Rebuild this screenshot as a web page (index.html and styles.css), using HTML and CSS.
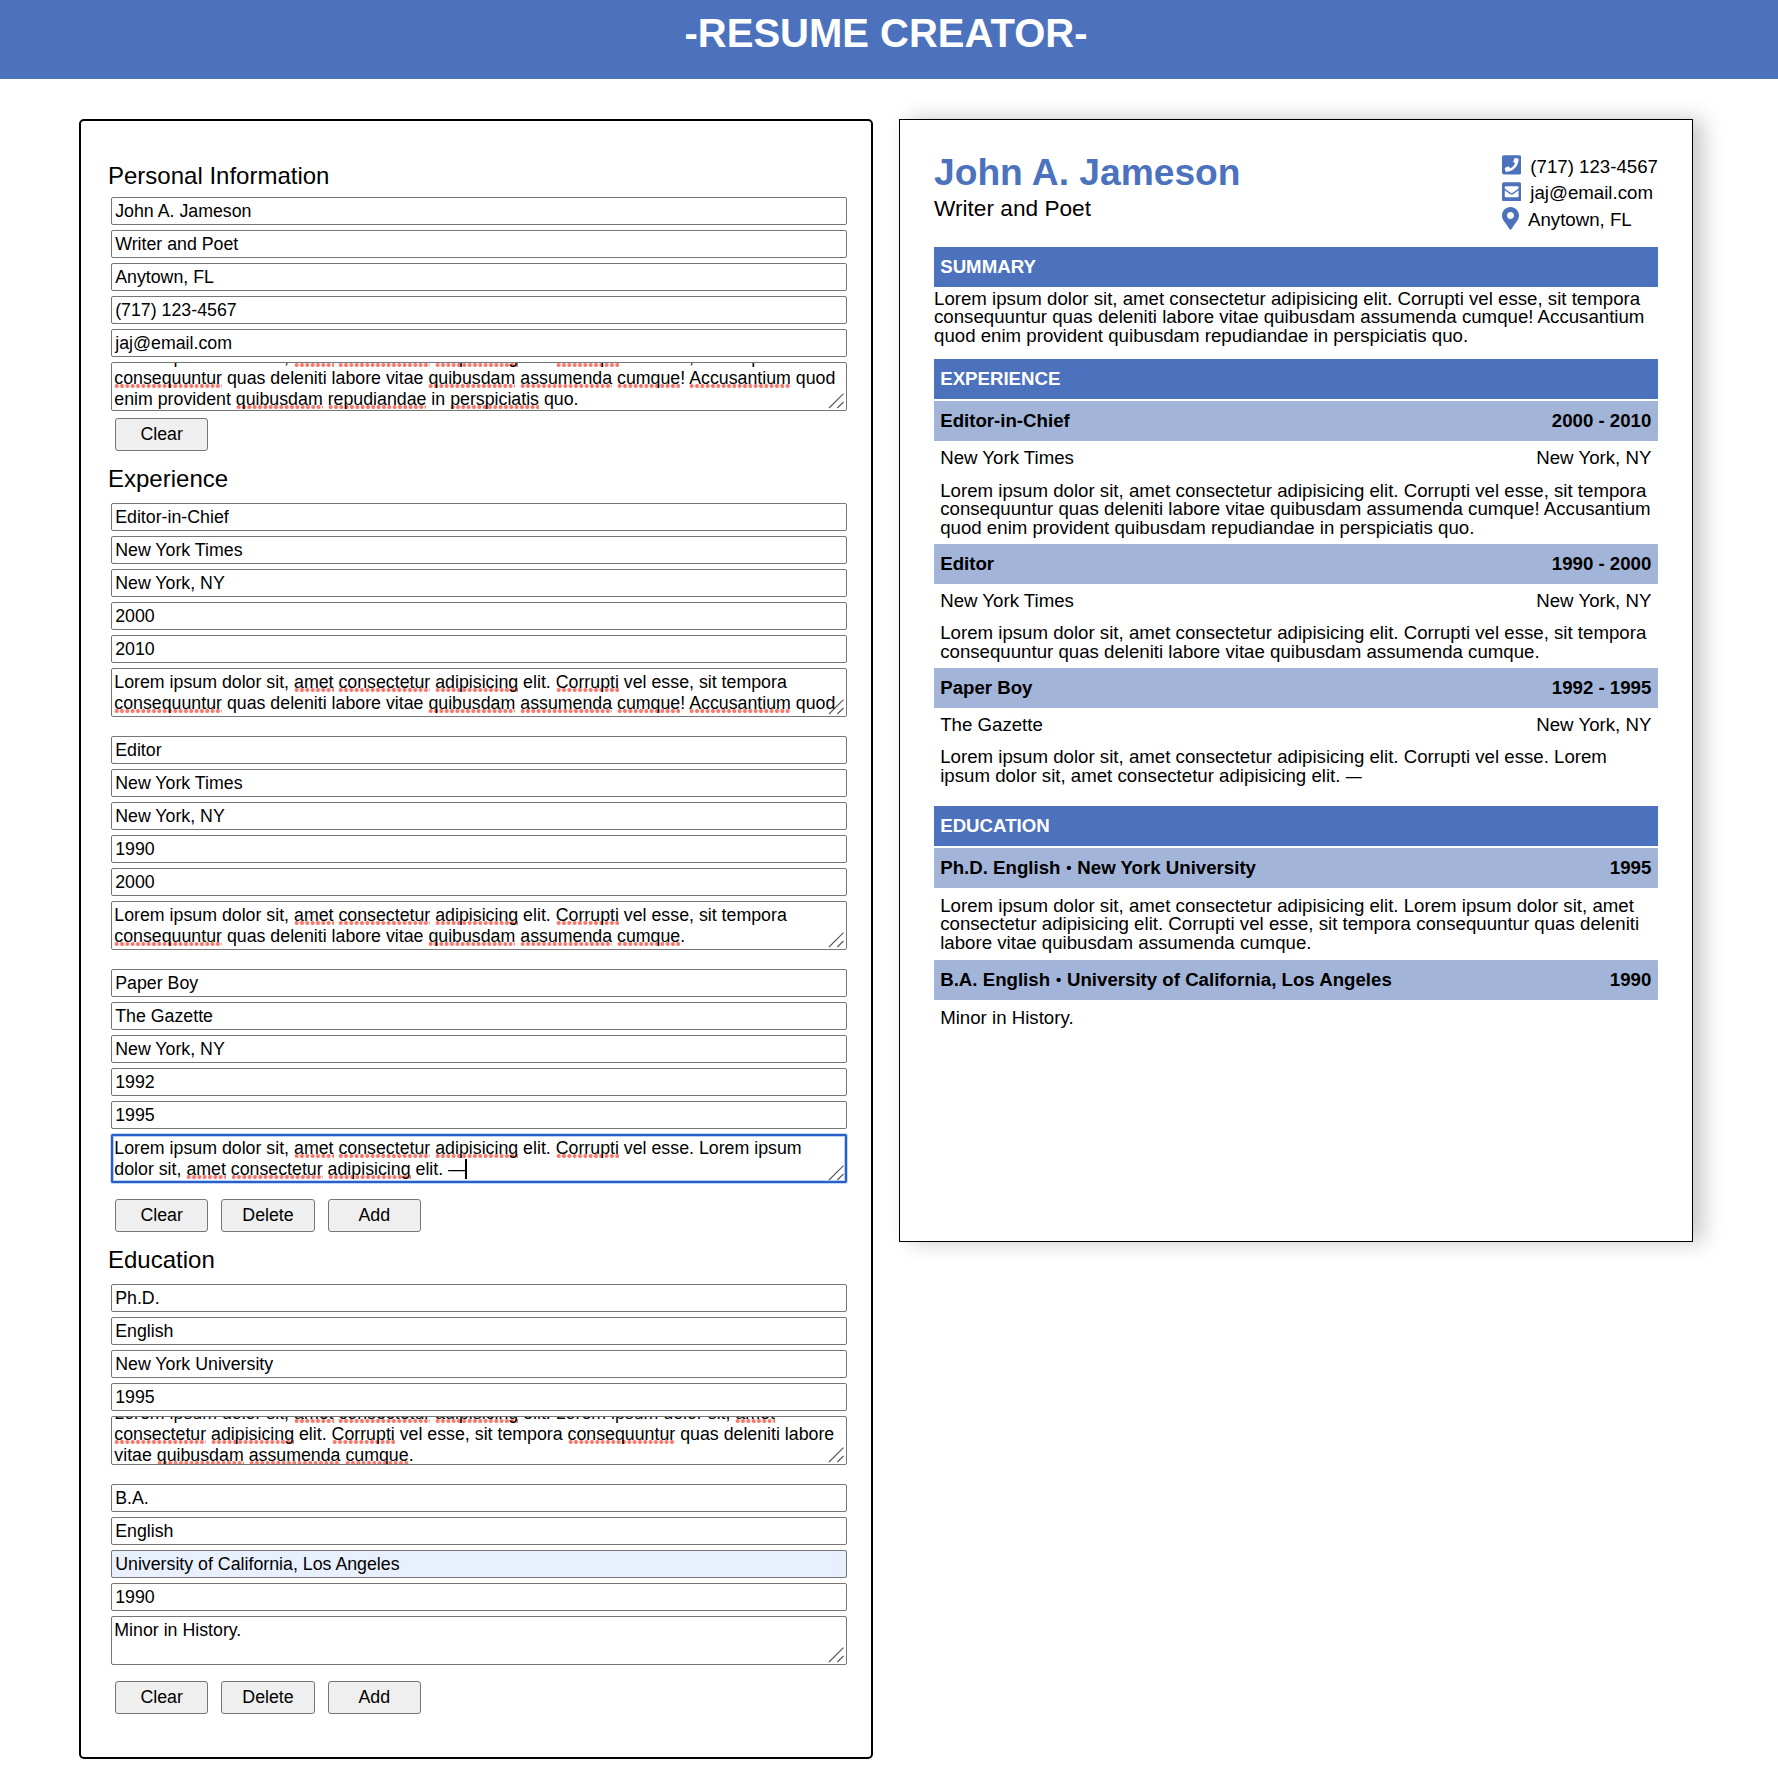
FILE: index.html
```html
<!DOCTYPE html>
<html lang="en">
<head>
<meta charset="utf-8">
<title>Resume Creator</title>
<link rel="stylesheet" href="styles.css">
</head>
<body>
<svg class="defs" aria-hidden="true">
  <symbol id="grip" viewBox="0 0 16 16"><path d="M1 15 15.5 .7M9.3 15l6.2-6" fill="none" stroke="#555" stroke-width="1.1"/></symbol>
</svg>
<header class="banner"><h1>-RESUME CREATOR-</h1></header>
<main class="workspace">
  <form class="editor">
    <section class="section personal">
      <h2>Personal Information</h2>
      <div class="group">
        <div class="field">John A. Jameson</div>
        <div class="field">Writer and Poet</div>
        <div class="field">Anytown, FL</div>
        <div class="field">(717) 123-4567</div>
        <div class="field">jaj@email.com</div>
        <div class="area scrolled-summary"><p>Lorem ipsum dolor sit, <u>amet</u> <u>consectetur</u> <u>adipisicing</u> elit. <u>Corrupti</u> vel esse, sit tempora <u>consequuntur</u> quas deleniti labore vitae <u>quibusdam</u> <u>assumenda</u> <u>cumque</u>! <u>Accusantium</u> quod enim provident <u>quibusdam</u> <u>repudiandae</u> in <u>perspiciatis</u> quo.</p><svg class="grip"><use href="#grip"/></svg></div>
      </div>
      <div class="actions"><button type="button">Clear</button></div>
    </section>

    <section class="section">
      <h2>Experience</h2>
      <div class="group">
        <div class="field">Editor-in-Chief</div>
        <div class="field">New York Times</div>
        <div class="field">New York, NY</div>
        <div class="field">2000</div>
        <div class="field">2010</div>
        <div class="area"><p>Lorem ipsum dolor sit, <u>amet</u> <u>consectetur</u> <u>adipisicing</u> elit. <u>Corrupti</u> vel esse, sit tempora <u>consequuntur</u> quas deleniti labore vitae <u>quibusdam</u> <u>assumenda</u> <u>cumque</u>! <u>Accusantium</u> quod</p><svg class="grip"><use href="#grip"/></svg></div>
      </div>
      <div class="group">
        <div class="field">Editor</div>
        <div class="field">New York Times</div>
        <div class="field">New York, NY</div>
        <div class="field">1990</div>
        <div class="field">2000</div>
        <div class="area"><p>Lorem ipsum dolor sit, <u>amet</u> <u>consectetur</u> <u>adipisicing</u> elit. <u>Corrupti</u> vel esse, sit tempora <u>consequuntur</u> quas deleniti labore vitae <u>quibusdam</u> <u>assumenda</u> <u>cumque</u>.</p><svg class="grip"><use href="#grip"/></svg></div>
      </div>
      <div class="group">
        <div class="field">Paper Boy</div>
        <div class="field">The Gazette</div>
        <div class="field">New York, NY</div>
        <div class="field">1992</div>
        <div class="field">1995</div>
        <div class="area focused"><p>Lorem ipsum dolor sit, <u>amet</u> <u>consectetur</u> <u>adipisicing</u> elit. <u>Corrupti</u> vel esse. Lorem ipsum dolor sit, <u>amet</u> <u>consectetur</u> <u>adipisicing</u> elit. —<span class="caret"></span></p><svg class="grip"><use href="#grip"/></svg></div>
      </div>
      <div class="actions"><button type="button">Clear</button><button type="button">Delete</button><button type="button">Add</button></div>
    </section>

    <section class="section">
      <h2>Education</h2>
      <div class="group">
        <div class="field">Ph.D.</div>
        <div class="field">English</div>
        <div class="field">New York University</div>
        <div class="field">1995</div>
        <div class="area scrolled-degree"><p>Lorem ipsum dolor sit, <u>amet</u> <u>consectetur</u> <u>adipisicing</u> elit. Lorem ipsum dolor sit, <u>amet</u> <u>consectetur</u> <u>adipisicing</u> elit. <u>Corrupti</u> vel esse, sit tempora <u>consequuntur</u> quas deleniti labore vitae <u>quibusdam</u> <u>assumenda</u> <u>cumque</u>.</p><svg class="grip"><use href="#grip"/></svg></div>
      </div>
      <div class="group">
        <div class="field">B.A.</div>
        <div class="field">English</div>
        <div class="field autofilled">University of California, Los Angeles</div>
        <div class="field">1990</div>
        <div class="area"><p>Minor in History.</p><svg class="grip"><use href="#grip"/></svg></div>
      </div>
      <div class="actions"><button type="button">Clear</button><button type="button">Delete</button><button type="button">Add</button></div>
    </section>
  </form>

  <article class="paper">
    <header class="paper-head">
      <div class="identity">
        <h2 class="name">John A. Jameson</h2>
        <p class="role">Writer and Poet</p>
      </div>
      <ul class="contact">
        <li><svg class="square" viewBox="0 32 448 448"><path d="M400 32H48A48 48 0 0 0 0 80v352a48 48 0 0 0 48 48h352a48 48 0 0 0 48-48V80a48 48 0 0 0-48-48zM94 416c-7.033 0-13.057-4.873-14.616-11.627l-14.998-65a15 15 0 0 1 8.707-17.16l69.998-29.999a15 15 0 0 1 17.518 4.289l30.997 37.885c48.944-22.963 88.297-62.858 110.781-110.78l-37.886-30.997a15.001 15.001 0 0 1-4.289-17.518l30-69.998a15 15 0 0 1 17.16-8.707l65 14.998A14.997 14.997 0 0 1 384 126c0 160.292-129.945 290-290 290z"/></svg>(717) 123-4567</li>
        <li><svg class="square" viewBox="0 32 448 448"><path d="M400 32H48C21.49 32 0 53.49 0 80v352c0 26.51 21.49 48 48 48h352c26.51 0 48-21.49 48-48V80c0-26.51-21.49-48-48-48zM178.117 262.104C87.429 196.287 88.353 196.121 64 177.167V152c0-13.255 10.745-24 24-24h272c13.255 0 24 10.745 24 24v25.167c-24.371 18.969-23.434 19.124-114.117 84.938-10.5 7.655-31.392 26.12-45.883 25.894-14.503.218-35.367-18.227-45.883-25.895zM384 217.775V360c0 13.255-10.745 24-24 24H88c-13.255 0-24-10.745-24-24V217.775c13.958 10.794 33.329 25.236 95.303 70.214 14.162 10.341 37.975 32.145 64.694 32.01 26.887.134 51.036-22.041 64.72-32.025 61.958-44.964 81.325-59.406 95.283-70.199z"/></svg>jaj@email.com</li>
        <li><svg class="pin" viewBox="0 0 384 512"><path d="M172.268 501.67C26.97 291.031 0 269.413 0 192 0 85.961 85.961 0 192 0s192 85.961 192 192c0 77.413-26.97 99.031-172.268 309.67-9.535 13.774-29.93 13.773-39.464 0zM192 272c44.183 0 80-35.817 80-80s-35.817-80-80-80-80 35.817-80 80 35.817 80 80 80z"/></svg>Anytown, FL</li>
      </ul>
    </header>

    <section class="block">
      <h3 class="bar">SUMMARY</h3>
      <p class="summary">Lorem ipsum dolor sit, amet consectetur adipisicing elit. Corrupti vel esse, sit tempora consequuntur quas deleniti labore vitae quibusdam assumenda cumque! Accusantium quod enim provident quibusdam repudiandae in perspiciatis quo.</p>
    </section>

    <section class="block jobs">
      <h3 class="bar">EXPERIENCE</h3>
      <h4 class="subbar"><span>Editor-in-Chief</span><span>2000 - 2010</span></h4>
      <div class="place"><span>New York Times</span><span>New York, NY</span></div>
      <p class="detail">Lorem ipsum dolor sit, amet consectetur adipisicing elit. Corrupti vel esse, sit tempora consequuntur quas deleniti labore vitae quibusdam assumenda cumque! Accusantium quod enim provident quibusdam repudiandae in perspiciatis quo.</p>
      <h4 class="subbar"><span>Editor</span><span>1990 - 2000</span></h4>
      <div class="place"><span>New York Times</span><span>New York, NY</span></div>
      <p class="detail">Lorem ipsum dolor sit, amet consectetur adipisicing elit. Corrupti vel esse, sit tempora consequuntur quas deleniti labore vitae quibusdam assumenda cumque.</p>
      <h4 class="subbar"><span>Paper Boy</span><span>1992 - 1995</span></h4>
      <div class="place"><span>The Gazette</span><span>New York, NY</span></div>
      <p class="detail">Lorem ipsum dolor sit, amet consectetur adipisicing elit. Corrupti vel esse. Lorem ipsum dolor sit, amet consectetur adipisicing elit. <span class="dash">—</span></p>
    </section>

    <section class="block degrees">
      <h3 class="bar">EDUCATION</h3>
      <h4 class="subbar"><span>Ph.D. English <i>•</i> New York University</span><span>1995</span></h4>
      <p class="detail">Lorem ipsum dolor sit, amet consectetur adipisicing elit. Lorem ipsum dolor sit, amet consectetur adipisicing elit. Corrupti vel esse, sit tempora consequuntur quas deleniti labore vitae quibusdam assumenda cumque.</p>
      <h4 class="subbar"><span>B.A. English <i>•</i> University of California, Los Angeles</span><span>1990</span></h4>
      <p class="detail">Minor in History.</p>
    </section>
  </article>
</main>
</body>
</html>
```
FILE: styles.css
```css
* { box-sizing: border-box; margin: 0; padding: 0; }

:root {
  --blue: #4c72bd;
  --pale: #a2b5d9;
  --edge: #767676;
}

body {
  min-height: 1784px;
  background: #fff;
  color: #000;
  font-family: "Liberation Sans", Arial, Helvetica, sans-serif;
  font-size: 18.667px;
}

.defs { display: none; }

.banner {
  height: 79px;
  padding-top: 10px;
  background: var(--blue);
  color: #fff;
  text-align: center;
}
.banner h1 { font-size: 40px; line-height: 46px; padding-right: 6px; }

.workspace {
  display: flex;
  align-items: flex-start;
  gap: 26px;
  padding: 40px 0 0 79px;
}

/* editing form */
.editor {
  width: 794px;
  height: 1640px;
  padding: 41px 24px 0 27px;
  border: 2px solid #000;
  border-radius: 5px;
}
.section { margin-bottom: 13.7px; }
.section h2 {
  margin-bottom: 10px;
  font-size: 24px;
  font-weight: 400;
  line-height: 28px;
}
.section.personal h2 { margin-bottom: 7px; }

.group {
  display: flex;
  flex-direction: column;
  gap: 5px;
  margin-left: 3px;
}
.group + .group { margin-top: 18.67px; }

.field, .area {
  border: 1px solid var(--edge);
  border-radius: 2px;
  background: #fff;
  font-size: 17.778px;
  white-space: nowrap;
}
.field { height: 28px; padding: 0 3.2px; line-height: 26px; }
.autofilled { background: #e8f0fe; }

.area {
  position: relative;
  height: 49.33px;
  padding: 3px 1px 0 2.3px;
  line-height: 21px;
  white-space: normal;
  overflow: hidden;
}
.scrolled-summary p { margin-top: -19.5px; }
.scrolled-degree p { margin-top: -16.7px; }
.focused { outline: 2px solid #2760c8; outline-offset: -2px; box-shadow: 0 0 0 1px #c2d6f6, inset 0 0 0 2px #b9cff3; }

.area u {
  text-decoration: none;
  background: radial-gradient(circle at center, #f67b6e 1.6px, rgba(246, 123, 110, 0) 2.4px) left bottom / 5.333px 4px repeat-x;
}
.grip {
  position: absolute;
  right: 2px;
  bottom: 1px;
  width: 16px;
  height: 16px;
}
.caret {
  display: inline-block;
  width: 2px;
  height: 20px;
  margin: 0 -1px 0 -1px;
  background: #000;
  vertical-align: -4px;
}

.actions { display: flex; gap: 13px; margin: 15.67px 0 0 7px; }
.personal .actions { margin-top: 6.67px; }
.actions button {
  width: 93.33px;
  height: 33.33px;
  padding-bottom: 1px;
  border: 1px solid var(--edge);
  border-radius: 3px;
  background: #efefef;
  color: #000;
  font: 17.778px/30px "Liberation Sans", Arial, sans-serif;
}

/* resume sheet */
.paper {
  width: 794px;
  height: 1123px;
  padding: 32.67px 34px 0;
  border: 1px solid #000;
  background: #fff;
  box-shadow: 10px 0 20px rgba(0, 0, 0, .22);
  line-height: 18.667px;
}
.paper-head { display: flex; justify-content: space-between; height: 94.33px; }
.name {
  margin-top: 1.7px;
  color: var(--blue);
  font-size: 37.2px;
  line-height: 37.333px;
}
.role { margin-top: 2px; font-size: 22.667px; line-height: 28px; }

.contact { width: 156px; list-style: none; }
.contact li {
  display: flex;
  align-items: center;
  gap: 9px;
  height: 26.667px;
  padding-top: 2px;
  white-space: nowrap;
}
.contact svg { flex: none; fill: var(--blue); margin-top: -4px; }
.square { width: 19.33px; height: 19.67px; }
.pin { width: 17px; height: 22.667px; }

.bar, .subbar {
  height: 40px;
  padding: 0 6.67px 0 6.2px;
  font-size: 18.667px;
  font-weight: 700;
  line-height: 39.4px;
}
.bar { background: var(--blue); color: #fff; }
.subbar { display: flex; justify-content: space-between; background: var(--pale); }
/* small separator dot that keeps the advance of a full-size one */
.subbar i {
  display: inline-block;
  width: 6.53px;
  font-size: 15px;
  font-style: normal;
  line-height: 1;
  text-align: center;
  vertical-align: 1px;
}

.summary { padding: 2.67px 0 13.33px; }
.jobs .bar { margin-bottom: 2.5px; }
.jobs { padding-bottom: 14px; }
.place {
  display: flex;
  justify-content: space-between;
  padding: 7px 6.67px 0 6.2px;
  line-height: 20px;
}
.jobs .detail { padding: 13.17px 6.67px 6.3px 6.2px; }
.dash { font-size: 16px; line-height: 1; }
.degrees .bar { margin-bottom: 2.67px; }
.degrees .detail { padding: 8.4px 6.67px 7.6px 6.2px; }
```
